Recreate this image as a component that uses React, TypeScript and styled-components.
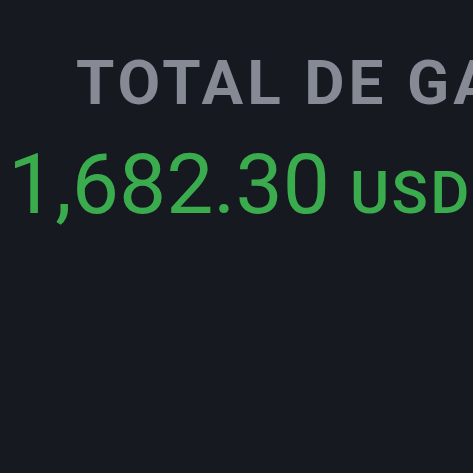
import React from 'react';
import styled, { createGlobalStyle } from 'styled-components';

const GlobalStyle = createGlobalStyle`
  html, body {
    margin: 0;
    padding: 0;
    background: #161920;
    overflow: hidden;
  }
`;

const Screen = styled.div`
  width: 473px;
  height: 473px;
  background: #161920;
  font-family: Roboto, 'Noto Sans', sans-serif;
  display: flex;
  flex-direction: column;
  padding-top: 47px;
  box-sizing: border-box;
  overflow: hidden;
`;

const Label = styled.div`
  color: #868a94;
  font-size: 62px;
  font-weight: 700;
  letter-spacing: 0.065em;
  line-height: 72px;
  white-space: nowrap;
  padding-left: 76px;
`;

const AmountRow = styled.div`
  display: flex;
  align-items: baseline;
  gap: 20px;
  margin-top: 24px;
  padding-left: 8px;
  color: #3aac4e;
  white-space: nowrap;
`;

const Amount = styled.span`
  font-size: 84px;
  font-weight: 400;
  line-height: 1;
`;

const Currency = styled.span<{ $size: number }>`
  font-size: ${(p) => p.$size}px;
  font-weight: 500;
  letter-spacing: 0.04em;
`;

export default function App() {
  return (
    <>
      <GlobalStyle />
      <Screen>
        <Label>TOTAL DE GANANCIAS</Label>
        <AmountRow>
          <Amount>1,682.30</Amount>
          <Currency $size={60}>USD</Currency>
        </AmountRow>
      </Screen>
    </>
  );
}
